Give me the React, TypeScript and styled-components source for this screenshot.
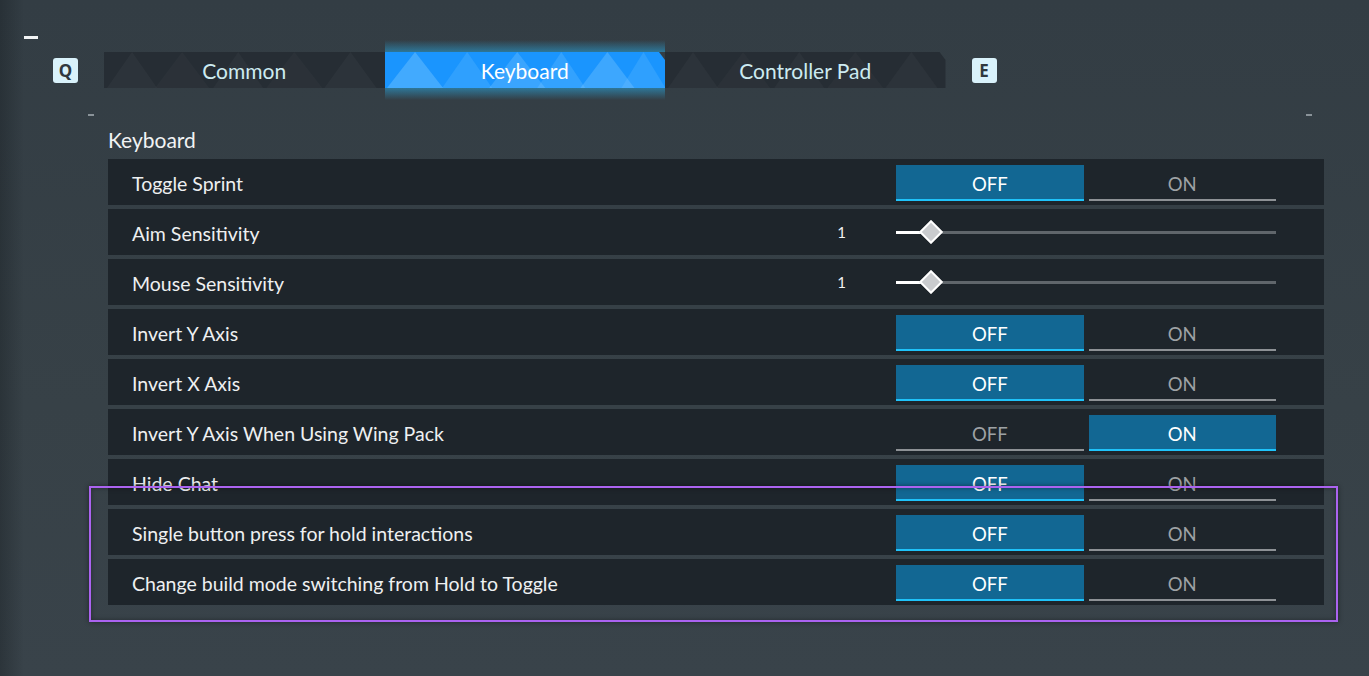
import React from "react";
import styled, { createGlobalStyle } from "styled-components";

const GlobalStyle = createGlobalStyle`
  html, body { margin: 0; padding: 0; }
  body {
    width: 1369px;
    height: 676px;
    overflow: hidden;
    background: #353f46;
    font-family: "Lato", "Noto Sans", sans-serif;
  }
`;

const Page = styled.div`
  position: relative;
  width: 1369px;
  height: 676px;
  box-sizing: border-box;
  padding-top: 36px;
  background:
    linear-gradient(90deg, rgba(20, 26, 30, 0.35) 0px, rgba(20, 26, 30, 0) 24px),
    linear-gradient(180deg, #333d44 0%, #374147 60%, #39434a 100%);
`;

const TopDash = styled.div`
  width: 14px;
  height: 3px;
  margin-left: 24px;
  background: #f2f4f5;
`;

const TabRow = styled.div`
  display: flex;
  align-items: center;
  margin-top: 13px;
  padding-left: 53px;
  height: 36px;
`;

const KeyCap = styled.div`
  width: 25px;
  height: 25px;
  border-radius: 3px;
  background: #d9f2fb;
  color: #30383e;
  font-family: "Noto Sans", sans-serif;
  font-weight: 700;
  font-size: 17px;
  line-height: 1;
  display: flex;
  align-items: center;
  justify-content: center;
  margin: 0 26px 0 0;
  &:last-child { margin: 0 0 0 26px; }
`;

const Tabs = styled.div`
  display: flex;
  height: 36px;
`;

const Tab = styled.div<{ $active?: boolean; $cut?: boolean }>`
  position: relative;
  width: 280.5px;
  height: 36px;
  display: flex;
  align-items: center;
  justify-content: center;
  font-size: 21px;
  color: ${(p) => (p.$active ? "#ffffff" : "#cdebf1")};
  background: ${(p) => (p.$active ? "#1a95fe" : "#262d34")};
  clip-path: ${(p) =>
    p.$cut ? "polygon(0 0, calc(100% - 6px) 0, 100% 8px, 100% 100%, 0 100%)" : "none"};
`;

const TabGlowWrap = styled.div`
  position: relative;
  display: flex;
  &::before, &::after {
    content: "";
    position: absolute;
    left: 0;
    right: 0;
    height: 12px;
    pointer-events: none;
  }
  &::before {
    top: -12px;
    background: linear-gradient(0deg, rgba(40, 175, 235, 0.5), rgba(40, 175, 235, 0));
  }
  &::after {
    bottom: -12px;
    background: linear-gradient(180deg, rgba(40, 175, 235, 0.5), rgba(40, 175, 235, 0));
  }
`;

const TabLabel = styled.span`
  position: relative;
  z-index: 1;
`;

const Pattern = styled.svg`
  position: absolute;
  inset: 0;
  width: 100%;
  height: 100%;
`;

const Panel = styled.div`
  position: relative;
  margin: 26px 0 0 88px;
  width: 1224px;
`;

const CornerDashes = styled.div`
  display: flex;
  justify-content: space-between;
  height: 2px;
`;

const SmallDash = styled.div`
  width: 6px;
  height: 2px;
  background: #8a9399;
`;

const SectionTitle = styled.div`
  margin: 11px 0 0 20px;
  height: 32px;
  font-size: 21px;
  color: #f1f3f4;
  line-height: 26px;
`;

const Rows = styled.div`
  display: flex;
  flex-direction: column;
  gap: 4px;
  margin-left: 20px;
  width: 1216px;
`;

const Row = styled.div`
  height: 46px;
  background: #1e252b;
  display: flex;
  align-items: center;
  box-sizing: border-box;
  padding: 0 48px 0 24px;
`;

const Label = styled.div`
  flex: 1;
  font-size: 19.5px;
  color: #eef0f1;
  padding-top: 2px;
`;

const Toggle = styled.div`
  display: flex;
  gap: 5px;
  width: 380px;
  height: 36px;
  margin-top: 1px;
`;

const Seg = styled.div<{ $on: boolean }>`
  flex: 1;
  display: flex;
  align-items: center;
  justify-content: center;
  box-sizing: border-box;
  padding-top: 4px;
  font-size: 18.5px;
  background: ${(p) => (p.$on ? "#126793" : "transparent")};
  color: ${(p) => (p.$on ? "#ffffff" : "#9ea2a5")};
  border-bottom: 2px solid ${(p) => (p.$on ? "#1fc3fa" : "#8d9195")};
`;

const Value = styled.div`
  font-size: 15px;
  color: #f2f2f2;
  margin-right: 50px;
`;

const Slider = styled.div`
  position: relative;
  width: 380px;
  height: 24px;
  display: flex;
  align-items: center;
`;

const Track = styled.div`
  width: 100%;
  height: 3px;
  background: #60666b;
  position: relative;
`;

const Fill = styled.div`
  position: absolute;
  left: 0;
  top: 0;
  height: 100%;
  background: #ffffff;
`;

const Thumb = styled.div`
  position: absolute;
  top: 50%;
  width: 13px;
  height: 13px;
  background: #c9cbce;
  border: 2.5px solid #ffffff;
  transform: translate(-50%, -50%) rotate(45deg);
`;

const Highlight = styled.div`
  position: absolute;
  left: 89px;
  top: 486px;
  width: 1249px;
  height: 136px;
  box-sizing: border-box;
  border: 2.5px solid #ab63f0;
  box-shadow: 0 0 5px rgba(0, 0, 0, 0.45), inset 0 0 5px rgba(0, 0, 0, 0.35);
  pointer-events: none;
`;

type Setting =
  | { kind: "toggle"; label: string; on: boolean }
  | { kind: "slider"; label: string; value: number; pct: number };

const settings: Setting[] = [
  { kind: "toggle", label: "Toggle Sprint", on: false },
  { kind: "slider", label: "Aim Sensitivity", value: 1, pct: 9.2 },
  { kind: "slider", label: "Mouse Sensitivity", value: 1, pct: 9.2 },
  { kind: "toggle", label: "Invert Y Axis", on: false },
  { kind: "toggle", label: "Invert X Axis", on: false },
  { kind: "toggle", label: "Invert Y Axis When Using Wing Pack", on: true },
  { kind: "toggle", label: "Hide Chat", on: false },
  { kind: "toggle", label: "Single button press for hold interactions", on: false },
  { kind: "toggle", label: "Change build mode switching from Hold to Toggle", on: false },
];

const TrianglePattern: React.FC<{ active?: boolean }> = ({ active }) => {
  const peaks = active
    ? [
        { x: 30, w: 56, o: 0.35 },
        { x: 82, w: 50, o: 0.18 },
        { x: 132, w: 56, o: 0.28 },
        { x: 176, w: 48, o: 0.22 },
        { x: 222, w: 54, o: 0.3 },
        { x: 258, w: 44, o: 0.18 },
      ]
    : [
        { x: 28, w: 50, o: 0.03 },
        { x: 78, w: 54, o: 0.022 },
        { x: 134, w: 50, o: 0.03 },
        { x: 190, w: 56, o: 0.022 },
        { x: 246, w: 52, o: 0.03 },
      ];
  const color = active ? "#8fd0ff" : "#ffffff";
  return (
    <Pattern viewBox="0 0 280 36" preserveAspectRatio="none" aria-hidden>
      {peaks.map((p, i) => (
        <polygon
          key={i}
          points={`${p.x - p.w / 2},36 ${p.x},0 ${p.x + p.w / 2},36`}
          fill={color}
          opacity={p.o}
        />
      ))}
    </Pattern>
  );
};

export default function App() {
  return (
    <>
      <GlobalStyle />
      <Page>
        <TopDash />
        <TabRow>
          <KeyCap>Q</KeyCap>
          <Tabs>
            <Tab>
              <TrianglePattern />
              <TabLabel>Common</TabLabel>
            </Tab>
            <TabGlowWrap>
              <Tab $active $cut>
                <TrianglePattern active />
                <TabLabel>Keyboard</TabLabel>
              </Tab>
            </TabGlowWrap>
            <Tab $cut>
              <TrianglePattern />
              <TabLabel>Controller Pad</TabLabel>
            </Tab>
          </Tabs>
          <KeyCap>E</KeyCap>
        </TabRow>
        <Panel>
          <CornerDashes>
            <SmallDash />
            <SmallDash />
          </CornerDashes>
          <SectionTitle>Keyboard</SectionTitle>
          <Rows>
            {settings.map((s) => (
              <Row key={s.label}>
                <Label>{s.label}</Label>
                {s.kind === "toggle" ? (
                  <Toggle>
                    <Seg $on={!s.on}>OFF</Seg>
                    <Seg $on={s.on}>ON</Seg>
                  </Toggle>
                ) : (
                  <>
                    <Value>{s.value}</Value>
                    <Slider>
                      <Track>
                        <Fill style={{ width: `${s.pct}%` }} />
                        <Thumb style={{ left: `${s.pct}%` }} />
                      </Track>
                    </Slider>
                  </>
                )}
              </Row>
            ))}
          </Rows>
        </Panel>
        <Highlight />
      </Page>
    </>
  );
}
